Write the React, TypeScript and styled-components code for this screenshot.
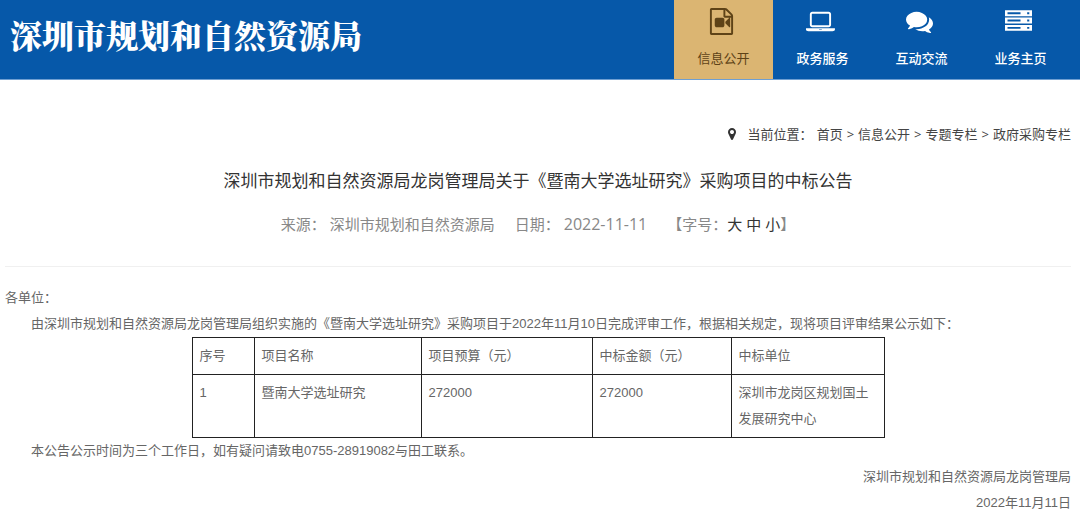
import React from "react";
import styled, { createGlobalStyle, css } from "styled-components";

const GlobalStyle = createGlobalStyle`
  *, *::before, *::after { box-sizing: border-box; }
  body {
    margin: 0;
    background: #fff;
    color: #666;
    font-family: "Liberation Sans", "Noto Sans CJK SC", sans-serif;
    font-size: 13px;
    line-height: 26px;
  }
  a { color: inherit; text-decoration: none; }
`;

const uiFont = css`
  font-family: "Open Sans", "Noto Sans CJK SC", sans-serif;
`;

const Header = styled.header`
  display: flex;
  justify-content: space-between;
  height: 80px;
  padding: 0 10px;
  background: #0658a9;
  border-bottom: 1px solid #6f9fd2;
`;

const SiteName = styled.h1`
  margin: 0;
  color: #fff;
  font-family: "Noto Serif CJK SC", "Source Han Serif SC", "Noto Sans CJK SC", serif;
  font-size: 32px;
  font-weight: 900;
  line-height: 68px;
  white-space: nowrap;
`;

const Nav = styled.nav`
  display: flex;
  margin-left: auto;
`;

const NavLink = styled.a<{ $active?: boolean }>`
  ${uiFont}
  display: flex;
  flex-direction: column;
  align-items: center;
  gap: 10px;
  width: 99px;
  padding-top: 8px;
  color: ${(p) => (p.$active ? "#5e4317" : "#fff")};
  background: ${(p) => (p.$active ? "#dbb572" : "transparent")};
  font-weight: ${(p) => (p.$active ? 400 : 500)};

  svg { height: 27px; margin-right: 4px; fill: currentColor; }
`;

const Page = styled.main`
  padding: 41px 9px 16px 5px;
`;

const Breadcrumb = styled.nav`
  ${uiFont}
  display: flex;
  justify-content: flex-end;
  align-items: center;
  gap: 4px;
  color: #444;

  svg { height: 12px; margin-right: 8px; fill: #333; }
`;

const Title = styled.h2`
  margin: 22px 0 0;
  color: #333;
  font-size: 17px;
  font-weight: 400;
  line-height: 26px;
  text-align: center;
`;

const Meta = styled.div`
  ${uiFont}
  display: flex;
  justify-content: center;
  gap: 20px;
  padding: 16px 0 29px;
  border-bottom: 1px solid #f0f0f0;
  color: #888;
  font-size: 15px;
`;

const MetaItem = styled.span`
  display: flex;
  gap: 4px;
`;

const PostDate = styled.time`
  font-size: 16px;
`;

const SizePicker = styled.div`
  display: flex;
`;

const SizeOptions = styled.div`
  display: flex;
  gap: 4px;
`;

const SizeButton = styled.button`
  padding: 0;
  border: 0;
  background: none;
  color: #333;
  font: inherit;
  cursor: pointer;
`;

const Article = styled.article`
  padding-top: 18px;
`;

const Paragraph = styled.p<{ $indent?: boolean; $right?: boolean }>`
  margin: 0;
  text-indent: ${(p) => (p.$indent ? "2em" : "0")};
  text-align: ${(p) => (p.$right ? "right" : "left")};
`;

const ResultTable = styled.table`
  width: 692px;
  max-width: 100%;
  margin: 0 auto;
  border-collapse: collapse;
  table-layout: fixed;
`;

const Cell = styled.td`
  padding: 5px 7px;
  border: 1px solid #222;
  font-weight: 400;
  text-align: left;
  vertical-align: top;
`;

const VideoFileIcon = () => (
  <svg viewBox="0 0 1792 1792" aria-hidden="true">
    <path d="M1596 380q28 28 48 76t20 88v1152q0 40-28 68t-68 28h-1344q-40 0-68-28t-28-68v-1600q0-40 28-68t68-28h896q40 0 88 20t76 48zm-444-244v376h376q-10-29-22-41l-313-313q-12-12-41-22zm384 1528v-1024h-416q-40 0-68-28t-28-68v-416h-768v1536h1280zm-576-1024q52 0 90 38t38 90v384q0 52-38 90t-90 38h-384q-52 0-90-38t-38-90v-384q0-52 38-90t90-38h384zm492 2q20 8 20 30v576q0 22-20 30-8 2-12 2-14 0-23-9l-265-266v-90l265-266q9-9 23-9 4 0 12 2z" />
  </svg>
);

const LaptopIcon = () => (
  <svg viewBox="0 0 1920 1792" aria-hidden="true">
    <path d="M416 1280q-66 0-113-47t-47-113v-704q0-66 47-113t113-47h1088q66 0 113 47t47 113v704q0 66-47 113t-113 47h-1088zm-32-864v704q0 13 9.500 22.500t22.500 9.500h1088q13 0 22.500-9.500t9.500-22.500v-704q0-13-9.500-22.500t-22.500-9.500h-1088q-13 0-22.500 9.500t-9.500 22.500zm1376 928h160v96q0 40-47 68t-113 28h-1600q-66 0-113-28t-47-68v-96h1760zm-720 96q16 0 16-16t-16-16h-160q-16 0-16 16t16 16h160z" />
  </svg>
);

const CommentsIcon = () => (
  <svg viewBox="0 0 1792 1792" aria-hidden="true">
    <path d="M1408 768q0 139-94 257t-256.500 186.500-353.500 68.500q-86 0-176-16-124 88-278 128-36 9-86 16h-3q-11 0-20.500-8t-11.500-21q-1-3-1-6.500t.5-6.500 2-6l2.500-5 3.500-5.500 4-5 4.500-5 4-4.500q5-6 23-25t26-29.500 22.500-29 25-38.500 20.500-44q-124-72-195-177t-71-224q0-139 94-257t256.500-186.500 353.500-68.500 353.500 68.500 256.500 186.500 94 257zm384 256q0 120-71 224.500t-195 176.500q10 24 20.500 44t25 38.500 22.500 29 26 29.500 23 25q1 1 4 4.500t4.500 5 4 5 3.500 5.500l2.500 5 2 6 .5 6.500-1 6.500q-3 14-13 22t-22 7q-50-7-86-16-154-40-278-128-90 16-176 16-271 0-472-132 58 4 88 4 161 0 309-45t264-129q125-92 192-212t67-254q0-77-23-152 129 71 204 178t75 230z" />
  </svg>
);

const ServerIcon = () => (
  <svg viewBox="0 0 28 28" aria-hidden="true">
    {[2.3, 9.9, 17.5].map((y) => (
      <path
        key={y}
        fillRule="evenodd"
        d={`M0 ${y}h28v6.200h-28zM2.600 ${y + 2.1}v2h13.500v-2zM23 ${y + 2.1}v2h2.200v-2z`}
      />
    ))}
  </svg>
);

const PinIcon = () => (
  <svg viewBox="384 128 1024 1536" aria-hidden="true">
    <path d="M1152 640q0-106-75-181t-181-75-181 75-75 181 75 181 181 75 181-75 75-181zm256 0q0 109-33 179l-364 774q-16 33-47.500 52t-67.500 19-67.500-19-46.500-52l-365-774q-33-70-33-179 0-212 150-362t362-150 362 150 150 362z" />
  </svg>
);

const sections = [
  { label: "信息公开", Icon: VideoFileIcon, active: true },
  { label: "政务服务", Icon: LaptopIcon },
  { label: "互动交流", Icon: CommentsIcon },
  { label: "业务主页", Icon: ServerIcon },
];

const trail = ["首页", "信息公开", "专题专栏", "政府采购专栏"];

const columns = [
  { name: "序号", width: 62 },
  { name: "项目名称", width: 167 },
  { name: "项目预算（元）", width: 171 },
  { name: "中标金额（元）", width: 139 },
  { name: "中标单位", width: 153 },
];

const rows = [["1", "暨南大学选址研究", "272000", "272000", "深圳市龙岗区规划国土发展研究中心"]];

export default function App() {
  return (
    <>
      <GlobalStyle />
      <Header>
        <SiteName>深圳市规划和自然资源局</SiteName>
        <Nav>
          {sections.map(({ label, Icon, active }) => (
            <NavLink key={label} href="#" $active={active}>
              <Icon />
              {label}
            </NavLink>
          ))}
        </Nav>
      </Header>
      <Page>
        <Breadcrumb>
          <PinIcon />
          <span>当前位置：</span>
          {trail.map((name, i) => (
            <React.Fragment key={name}>
              {i > 0 && <span>&gt;</span>}
              <a href="#">{name}</a>
            </React.Fragment>
          ))}
        </Breadcrumb>
        <Title>深圳市规划和自然资源局龙岗管理局关于《暨南大学选址研究》采购项目的中标公告</Title>
        <Meta>
          <MetaItem>
            <span>来源：</span>
            <span>深圳市规划和自然资源局</span>
          </MetaItem>
          <MetaItem>
            <span>日期：</span>
            <PostDate>2022-11-11</PostDate>
          </MetaItem>
          <SizePicker>
            <span>【字号：</span>
            <SizeOptions>
              <SizeButton type="button">大</SizeButton>
              <SizeButton type="button">中</SizeButton>
              <SizeButton type="button">小</SizeButton>
            </SizeOptions>
            <span>】</span>
          </SizePicker>
        </Meta>
        <Article>
          <Paragraph>各单位：</Paragraph>
          <Paragraph $indent>
            由深圳市规划和自然资源局龙岗管理局组织实施的《暨南大学选址研究》采购项目于2022年11月10日完成评审工作，根据相关规定，现将项目评审结果公示如下：
          </Paragraph>
          <ResultTable>
            <colgroup>
              {columns.map((c) => (
                <col key={c.name} width={c.width} />
              ))}
            </colgroup>
            <thead>
              <tr>
                {columns.map((c) => (
                  <Cell as="th" scope="col" key={c.name}>
                    {c.name}
                  </Cell>
                ))}
              </tr>
            </thead>
            <tbody>
              {rows.map((row) => (
                <tr key={row[0]}>
                  {row.map((value, i) => (
                    <Cell key={columns[i].name}>{value}</Cell>
                  ))}
                </tr>
              ))}
            </tbody>
          </ResultTable>
          <Paragraph $indent>本公告公示时间为三个工作日，如有疑问请致电0755-28919082与田工联系。</Paragraph>
          <Paragraph $right>深圳市规划和自然资源局龙岗管理局</Paragraph>
          <Paragraph $right>2022年11月11日</Paragraph>
        </Article>
      </Page>
    </>
  );
}
